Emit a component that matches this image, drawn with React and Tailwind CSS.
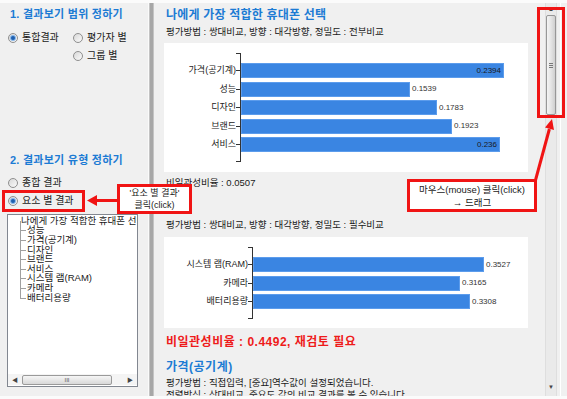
import React from "react";

const chart1 = [
  { label: "가격(공기계)", value: 0.2394, inside: true },
  { label: "성능", value: 0.1539 },
  { label: "디자인", value: 0.1783 },
  { label: "브랜드", value: 0.1923 },
  { label: "서비스", value: 0.236, inside: true },
];

const chart2 = [
  { label: "시스템 램(RAM)", value: 0.3527 },
  { label: "카메라", value: 0.3165 },
  { label: "배터리용량", value: 0.3308 },
];

const treeItems = [
  "나에게 가장 적합한 휴대폰 선택",
  "성능",
  "가격(공기계)",
  "디자인",
  "브랜드",
  "서비스",
  "시스템 램(RAM)",
  "카메라",
  "배터리용량",
];

function Radio({ checked }) {
  return (
    <span className="inline-flex h-[10px] w-[10px] shrink-0 items-center justify-center rounded-full border border-[#8f8f8f] bg-gradient-to-br from-[#d8d8d8] to-[#fbfbfb]">
      {checked && (
        <span className="h-[4px] w-[4px] rounded-full bg-[#1f5fae] shadow-[0_0_0_1px_#86b6ea]" />
      )}
    </span>
  );
}

function RadioItem({ checked, label, className = "" }) {
  return (
    <div className={"flex h-[14px] items-center gap-[4px] text-[10px] leading-[14px] " + className}>
      <Radio checked={checked} />
      <span>{label}</span>
    </div>
  );
}

function BarChart({ data, scale, labelWidth, boxHeight }) {
  return (
    <div className="flex bg-white pt-[10px]" style={{ height: boxHeight }}>
      <div className="flex flex-col gap-[3.5px] py-[10px]" style={{ width: labelWidth }}>
        {data.map((d) => (
          <div key={d.label} className="flex h-[15px] items-center justify-end whitespace-nowrap text-[9px] leading-[15px] text-[#222]">
            {d.label}
          </div>
        ))}
      </div>
      <div className="flex h-fit w-[4px] flex-col">
        <div className="h-px w-full bg-[#333]" />
        <div className="flex flex-col gap-[3.5px] py-[9px]">
          {data.map((d) => (
            <div key={d.label} className="flex h-[15px] items-center">
              <div className="h-px w-full bg-[#333]" />
            </div>
          ))}
        </div>
        <div className="h-px w-full bg-[#333]" />
      </div>
      <div className="flex h-fit flex-1 flex-col gap-[3.5px] border-l border-[#333] py-[10px]">
        {data.map((d) => (
          <div key={d.label} className="flex h-[15px] items-center">
            <div
              className="flex h-[15px] items-center justify-end border border-[#5c9cec] bg-[#3a85e2] pr-[2px]"
              style={{ width: Math.round(d.value * scale) }}
            >
              {d.inside && (
                <span className="font-['Liberation_Sans'] text-[8px] leading-[10px] text-[#1a1a1a]">{d.value}</span>
              )}
            </div>
            {!d.inside && (
              <span className="ml-[2px] font-['Liberation_Sans'] text-[8px] leading-[10px] text-[#333]">{d.value}</span>
            )}
          </div>
        ))}
      </div>
    </div>
  );
}

function TreeRow({ text, first, last }) {
  return (
    <div className="flex h-[9.6px] items-center">
      <div className="relative ml-[12px] w-[6px] self-stretch">
        <div
          className={
            "absolute left-0 w-px bg-[#a0a0a0] " +
            (first ? "top-1/2 bottom-0" : last ? "top-0 bottom-1/2" : "top-0 bottom-0")
          }
        />
        <div className="absolute left-0 top-1/2 h-px w-full bg-[#a0a0a0]" />
      </div>
      <span className="whitespace-nowrap pl-[1px] text-[9.5px] leading-[10px] text-[#1a1a1a]">{text}</span>
    </div>
  );
}

export default function App() {
  return (
    <div className="relative h-[399px] w-[567px] overflow-hidden bg-[#fbfbfb] pt-[3px] text-[#1a1a1a] [font-family:'Liberation_Sans','Noto_Sans_CJK_KR',sans-serif]">
      <div className="flex h-[393px] bg-[#f0f0f0]">
        {/* Left panel */}
        <div className="flex w-[149px] flex-col border-r border-[#fafafa]">
          <div className="ml-[10px] mt-[4px] text-[11px] font-bold leading-[14px] tracking-[0.25px] text-[#1c7bd4]">
            1. 결과보기 범위 정하기
          </div>
          <div className="mt-[10px] flex pl-[8px]">
            <RadioItem checked label="통합결과" className="w-[65px]" />
            <RadioItem label="평가자 별" />
          </div>
          <div className="mt-[4px] pl-[73px]">
            <RadioItem label="그룹 별" />
          </div>
          <div className="ml-[10px] mt-[90px] text-[11px] font-bold leading-[14px] tracking-[0.25px] text-[#1c7bd4]">
            2. 결과보기 유형 정하기
          </div>
          <div className="mt-[9px] pl-[8px]">
            <RadioItem label="종합 결과" />
          </div>
          <div className="mt-[4px] pl-[8px]">
            <RadioItem checked label="요소 별 결과" />
          </div>
          <div className="ml-[7px] mt-[6px] flex h-[173px] w-[131px] flex-col overflow-hidden border border-[#828790] bg-white">
            <div className="flex flex-col pt-[1px]">
              {treeItems.map((t, i) => (
                <TreeRow key={t} text={t} first={i === 0} last={i === treeItems.length - 1} />
              ))}
            </div>
            <div className="flex-1" />
            <div className="mb-px flex h-[11px] items-center bg-[#f4f4f4]">
              <div className="flex w-[14px] items-center justify-center text-[6px] leading-none text-[#444]">◀</div>
              <div className="flex h-[10px] w-[90px] items-center justify-center rounded-[2px] border border-[#9a9a9a] bg-gradient-to-b from-[#f6f6f6] to-[#d8d8d8] text-[6px] leading-none text-[#555]">
                III
              </div>
              <div className="flex-1" />
              <div className="flex w-[14px] items-center justify-center text-[6px] leading-none text-[#444]">▶</div>
            </div>
          </div>
        </div>

        {/* Splitter */}
        <div className="w-[5px] border-x border-[#c4c4c4] bg-[#a7a7a7]" />

        {/* Right content */}
        <div className="flex w-[391px] flex-col overflow-hidden pl-[10px]">
          <div className="mt-[4px] pl-[2px] text-[12px] font-bold leading-[16px] tracking-[0.2px] text-[#1c7bd4]">
            나에게 가장 적합한 휴대폰 선택
          </div>
          <div className="mt-[3px] pl-[2px] text-[9.5px] leading-[12px]">
            평가방법 : 쌍대비교, 방향 : 대각방향, 정밀도 : 전부비교
          </div>
          <div className="mt-[5px] w-[364px]">
            <BarChart data={chart1} scale={1099} labelWidth={72} boxHeight={129} />
          </div>
          <div className="mt-[5px] pl-[2px] text-[9.5px] leading-[12px]">비일관성비율 : 0.0507</div>
          <div className="mt-[30px] pl-[2px] text-[9.5px] leading-[12px]">
            평가방법 : 쌍대비교, 방향 : 대각방향, 정밀도 : 필수비교
          </div>
          <div className="mt-[6px] w-[364px]">
            <BarChart data={chart2} scale={655} labelWidth={84} boxHeight={91} />
          </div>
          <div className="mt-[6px] pl-[2px] text-[12px] font-bold leading-[16px] tracking-[0.5px] text-[#ee1b1b]">
            비일관성비율 : 0.4492, 재검토 필요
          </div>
          <div className="mt-[9px] pl-[2px] text-[12px] font-bold leading-[16px] tracking-[0.5px] text-[#1c7bd4]">
            가격(공기계)
          </div>
          <div className="mt-[2px] pl-[2px] text-[9.5px] leading-[12px]">
            평가방법 : 직접입력, [중요]역수값이 설정되었습니다.
          </div>
          <div className="pl-[2px] text-[9.5px] leading-[12px]">
            정렬방식 : 상대비교, 중요도 값의 비교 결과를 볼 수 있습니다.
          </div>
        </div>

        {/* Vertical scrollbar */}
        <div className="flex w-[12px] flex-col border-x border-[#dedede] bg-[#eaeaea]">
          <div className="flex h-[12px] items-center justify-center text-[6px] leading-none text-[#444]">▲</div>
          <div className="flex h-[100px] items-center justify-center rounded-[2px] border border-[#979797] bg-gradient-to-r from-[#f4f4f4] via-[#e4e4e4] to-[#cfcfcf]">
            <div className="flex w-[4px] flex-col gap-px">
              <div className="h-px bg-[#777]" />
              <div className="h-px bg-[#777]" />
              <div className="h-px bg-[#777]" />
            </div>
          </div>
          <div className="flex-1" />
          <div className="mb-[4px] flex h-[10px] items-center justify-center text-[6px] leading-none text-[#444]">▼</div>
        </div>

        <div className="flex w-[10px]">
          <div className="w-[3px]" />
          <div className="w-px bg-white" />
        </div>
      </div>

      {/* Annotations */}
      <div className="absolute left-[2px] top-[190px] h-[22px] w-[83px] border-[3px] border-[#f01414]" />
      <div className="absolute left-[537px] top-[7px] h-[111px] w-[28px] border-[3px] border-[#f01414]" />

      <svg className="pointer-events-none absolute left-0 top-0" width="567" height="399">
        <line x1="118" y1="200.5" x2="95" y2="200.5" stroke="#f01414" strokeWidth="3" />
        <polygon points="87,200.5 97,195 97,206" fill="#f01414" />
        <line x1="535" y1="182" x2="549.4" y2="129" stroke="#f01414" strokeWidth="3" />
        <polygon points="552,119 554,130 545,127.6" fill="#f01414" />
      </svg>

      <div className="absolute left-[117px] top-[184px] flex h-[30px] w-[75px] flex-col items-center justify-center border-[3px] border-[#f01414] bg-white text-[9px] leading-[12px]">
        <span>'요소 별 결과'</span>
        <span>클릭(click)</span>
      </div>
      <div className="absolute left-[407px] top-[179px] flex h-[33px] w-[130px] flex-col items-center justify-center border-[3px] border-[#f01414] bg-white text-[9.5px] leading-[13px]">
        <span>마우스(mouse)  클릭(click)</span>
        <span>→ 드래그</span>
      </div>
    </div>
  );
}
